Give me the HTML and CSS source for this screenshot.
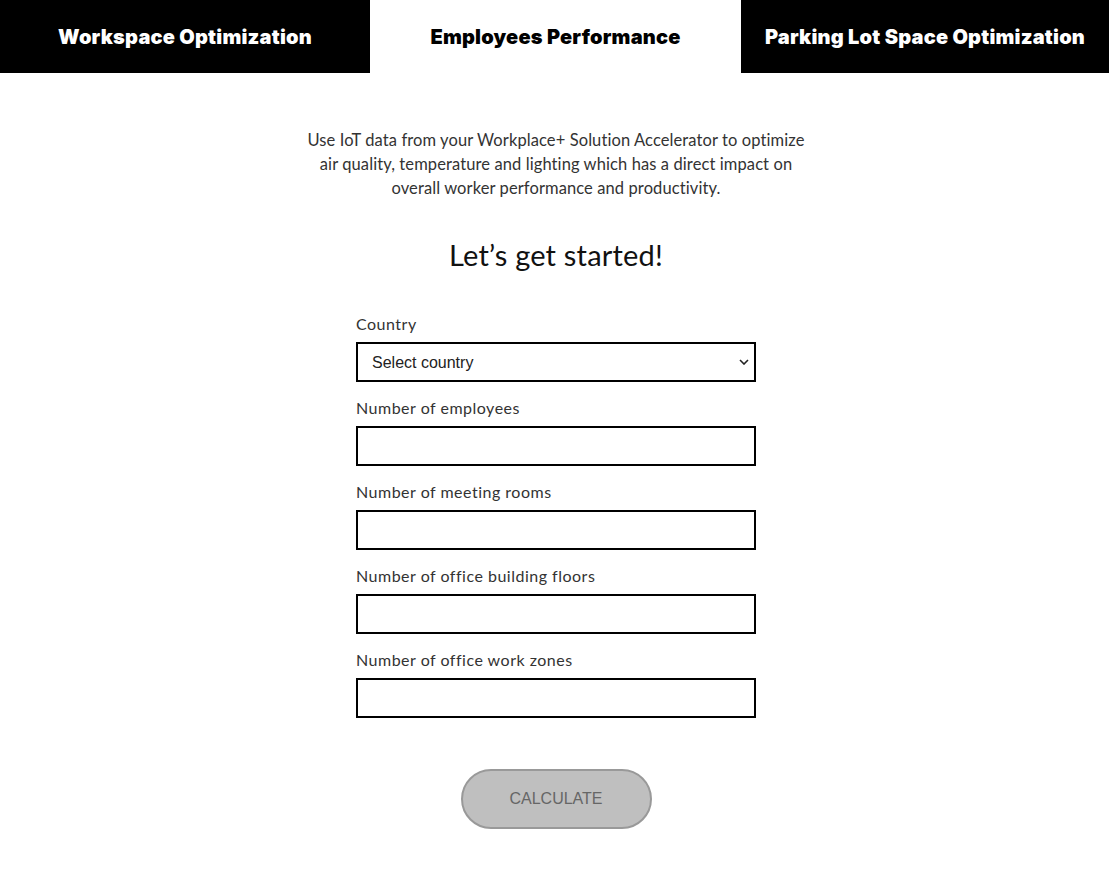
FILE: index.html
```html
<!DOCTYPE html>
<html lang="en">
<head>
<meta charset="utf-8">
<title>Employees Performance</title>
<link rel="stylesheet" href="styles.css">
</head>
<body>
<nav class="tabs">
  <div class="tab">Workspace Optimization</div>
  <div class="tab active">Employees Performance</div>
  <div class="tab">Parking Lot Space Optimization</div>
</nav>
<main class="content">
  <p class="intro">Use IoT data from your Workplace+ Solution Accelerator to optimize air quality, temperature and lighting which has a direct impact on overall worker performance and productivity.</p>
  <h1 class="title">Let’s get started!</h1>
  <form class="form">
    <label class="field">
      <span class="label">Country</span>
      <select class="control select">
        <option>Select country</option>
      </select>
    </label>
    <label class="field">
      <span class="label">Number of employees</span>
      <input class="control" type="text">
    </label>
    <label class="field">
      <span class="label">Number of meeting rooms</span>
      <input class="control" type="text">
    </label>
    <label class="field">
      <span class="label">Number of office building floors</span>
      <input class="control" type="text">
    </label>
    <label class="field">
      <span class="label">Number of office work zones</span>
      <input class="control" type="text">
    </label>
    <div class="actions">
      <button class="btn" type="button" disabled>CALCULATE</button>
    </div>
  </form>
</main>
</body>
</html>
```

FILE: styles.css
```css
* { box-sizing: border-box; }
html, body { margin: 0; padding: 0; background: #fff; }
body { font-family: Lato, "Open Sans", sans-serif; color: #222; }

.tabs {
  display: grid;
  grid-template-columns: 370px 371px 1fr;
  height: 73px;
}
.tab {
  display: flex;
  align-items: center;
  justify-content: center;
  background: #000;
  color: #fff;
  font-family: Inter, "Open Sans", sans-serif;
  font-weight: 900;
  font-size: 20px;
  letter-spacing: 0.2px;
  white-space: nowrap;
}
.tab.active { background: #fff; color: #000; }

.content {
  display: flex;
  flex-direction: column;
  align-items: center;
  padding-top: 55px;
  padding-left: 3px;
}
.intro {
  margin: 0;
  width: 505px;
  text-align: center;
  font-size: 16.5px;
  line-height: 24px;
  font-weight: 400;
  letter-spacing: 0.1px;
  color: #333;
}
.title {
  margin: 35px 0 0;
  font-weight: 400;
  font-size: 29px;
  line-height: 40px;
  letter-spacing: 0.2px;
  color: #111;
}
.form {
  width: 400px;
  margin-top: 39px;
  display: flex;
  flex-direction: column;
  gap: 16px;
}
.field {
  display: flex;
  flex-direction: column;
  gap: 8px;
}
.label {
  font-size: 16px;
  line-height: 20px;
  letter-spacing: 0.5px;
  color: #333;
}
.control {
  width: 400px;
  height: 40px;
  border: 2px solid #000;
  border-radius: 0;
  background: #fff;
  font-family: "Liberation Sans", Arial, sans-serif;
  font-size: 16px;
  padding: 0 14px;
  outline: none;
}
.select {
  color: #222;
  appearance: none;
  background-image: url("data:image/svg+xml,%3Csvg xmlns='http://www.w3.org/2000/svg' width='10' height='6' viewBox='0 0 10 6'%3E%3Cpath d='M1 1l4 4 4-4' fill='none' stroke='%23222' stroke-width='1.6'/%3E%3C/svg%3E");
  background-repeat: no-repeat;
  background-position: right 5px center;
}
.actions {
  display: flex;
  justify-content: center;
  margin-top: 35px;
}
.btn {
  width: 191px;
  height: 60px;
  border: 2px solid #999;
  border-radius: 30px;
  background: #bfbfbf;
  color: #666;
  font-family: "Liberation Sans", Arial, sans-serif;
  font-size: 16px;
}
```
